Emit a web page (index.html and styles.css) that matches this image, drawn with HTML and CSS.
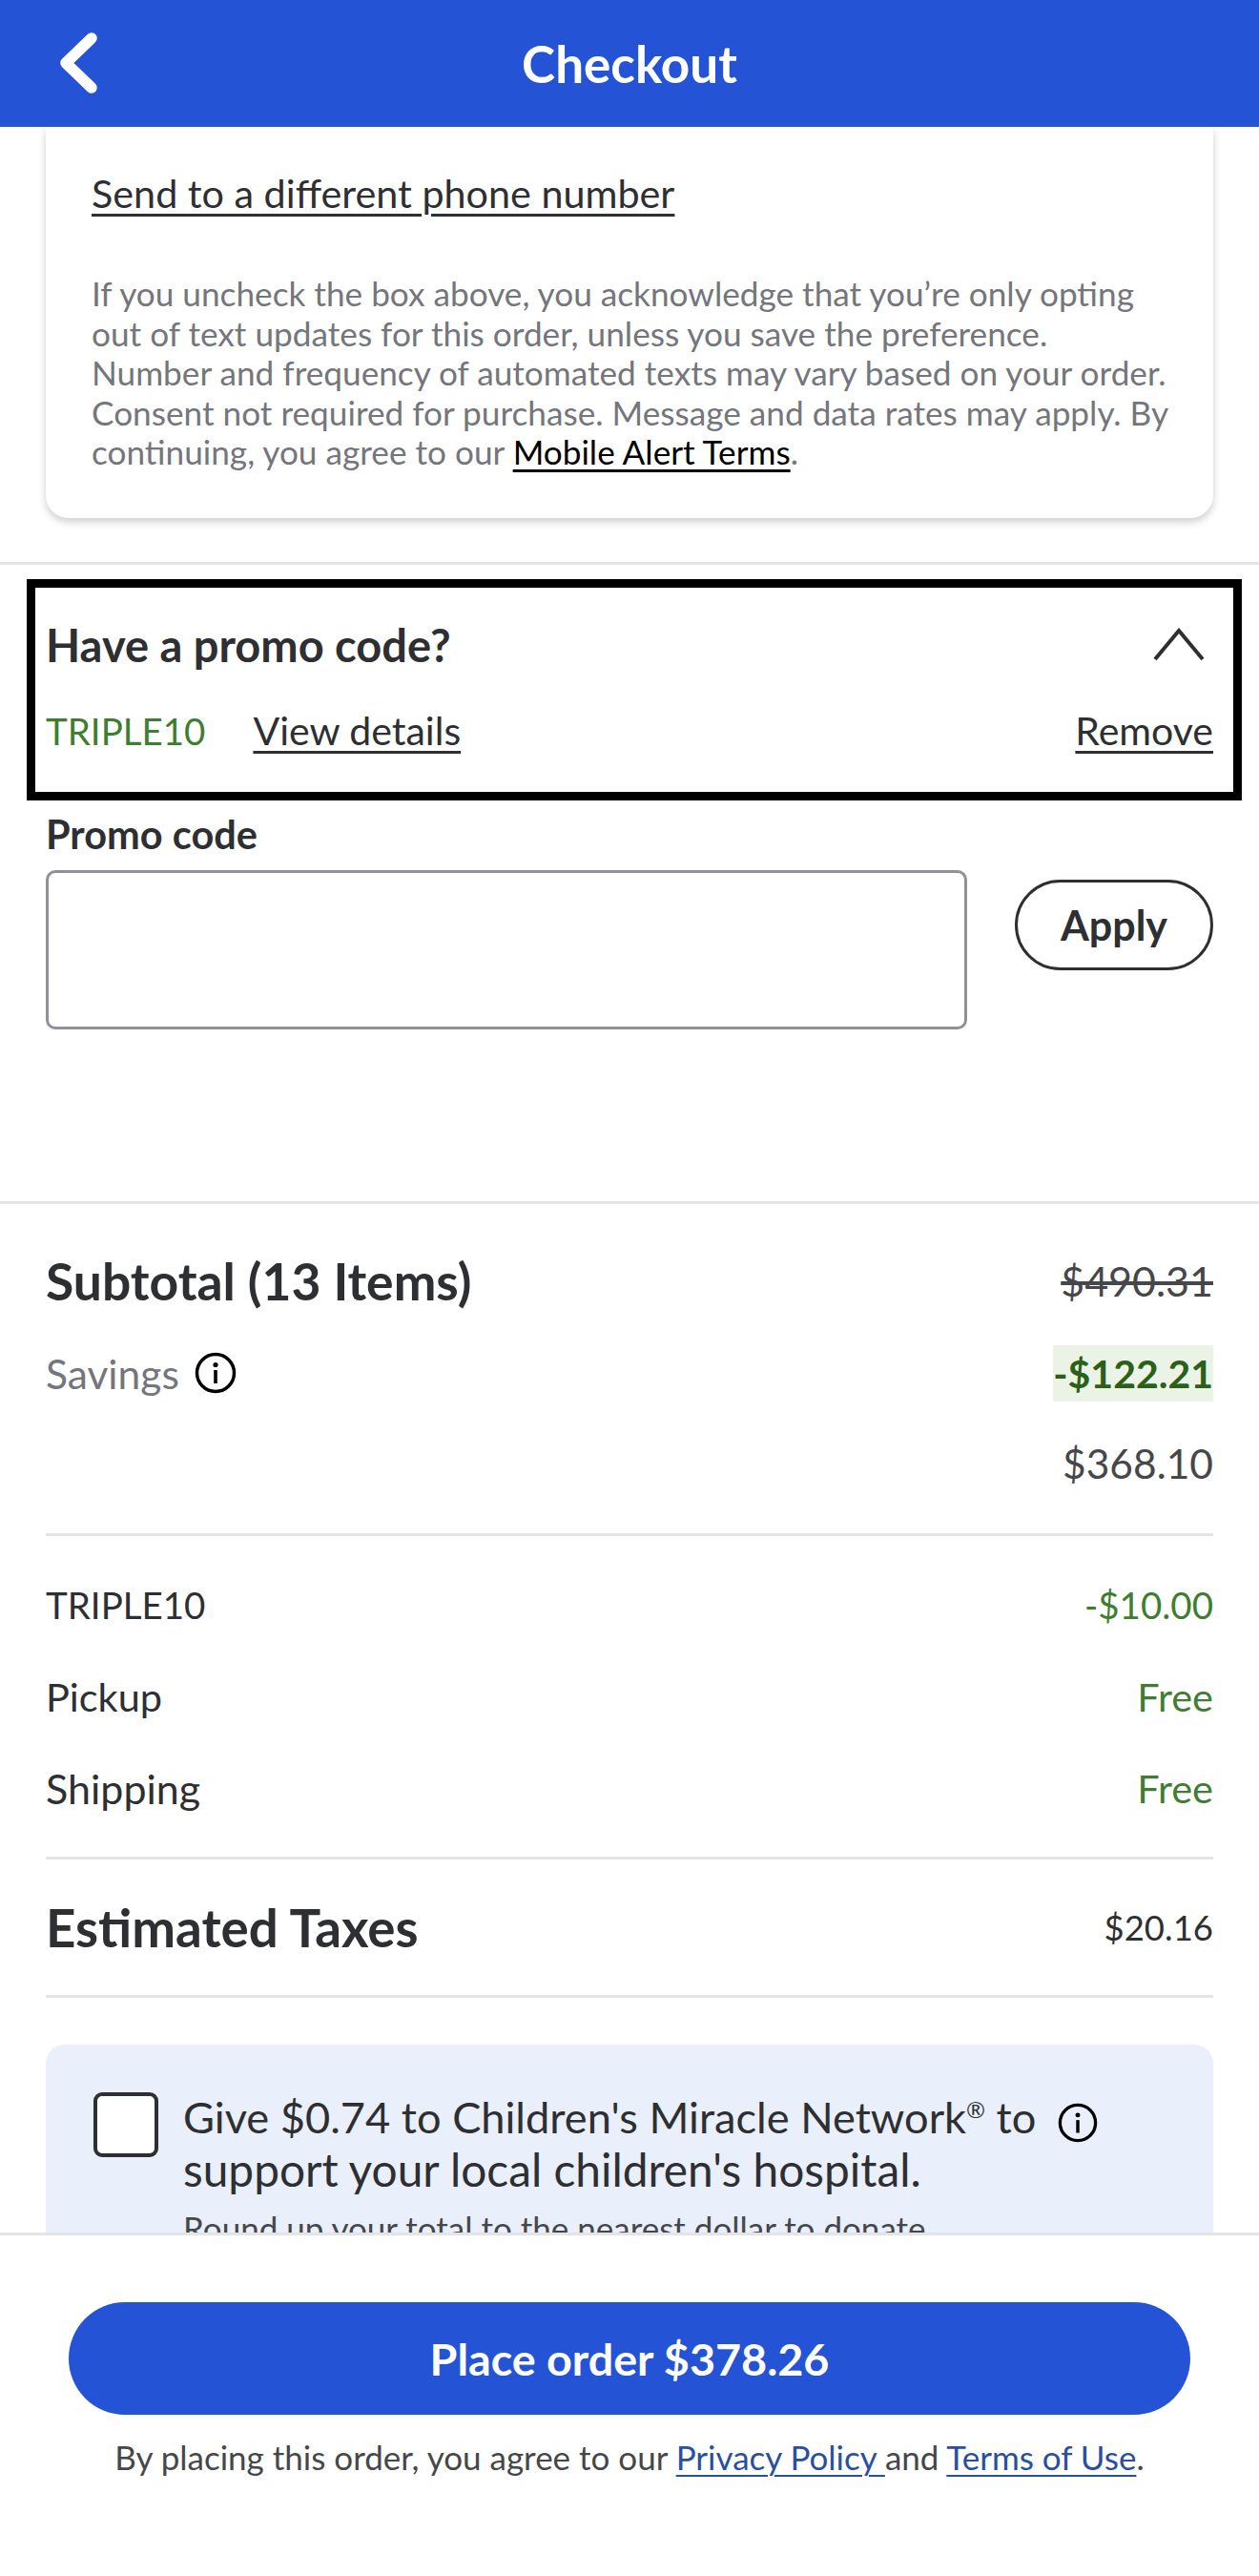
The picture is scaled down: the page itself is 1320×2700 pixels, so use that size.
FILE: index.html
```html
<!DOCTYPE html>
<html lang="en">
<head>
<meta charset="utf-8">
<title>Checkout</title>
<link rel="stylesheet" href="styles.css">
</head>
<body>
<div class="app">
  <header class="topbar">
    <svg class="back" viewBox="0 0 44 64" width="44" height="64"><path d="M36 6 L9 32 L36 58" fill="none" stroke="#fff" stroke-width="11.5" stroke-linecap="round" stroke-linejoin="round"/></svg>
    <h1 class="title">Checkout</h1>
  </header>
  <main class="scroll">
    <section class="card">
      <a class="link phone-link">Send to a different phone number</a>
      <p class="legal">If you uncheck the box above, you acknowledge that you’re only opting<br>out of text updates for this order, unless you save the preference.<br>Number and frequency of automated texts may vary based on your order.<br>Consent not required for purchase. Message and data rates may apply. By<br>continuing, you agree to our <a class="link-black">Mobile Alert Terms</a>.</p>
    </section>
    <hr class="rule-full first">
    <section class="promo-box">
      <div class="row promo-head">
        <h2 class="promo-title">Have a promo code?</h2>
        <svg class="chev" viewBox="0 0 56 36" width="56" height="36"><path d="M3 33 L28 3 L53 33" fill="none" stroke="#2e2f32" stroke-width="4"/></svg>
      </div>
      <div class="row promo-applied">
        <span class="code">TRIPLE10</span>
        <a class="link details">View details</a>
        <a class="link remove">Remove</a>
      </div>
    </section>
    <section class="promo-form">
      <label class="promo-label">Promo code</label>
      <div class="form-row">
        <div class="input"></div>
        <button class="apply">Apply</button>
      </div>
    </section>
    <hr class="rule-full second">
    <section class="summary">
      <div class="row sub-row">
        <h2 class="big-label subtotal">Subtotal (13 Items)</h2>
        <s class="was">$490.31</s>
      </div>
      <div class="row save-row">
        <span class="savings">Savings
          <svg class="info" viewBox="0 0 44 44" width="44" height="44"><circle cx="22" cy="22" r="19.5" fill="none" stroke="#000" stroke-width="3.5"/><circle cx="22" cy="13.5" r="2.6" fill="#000"/><rect x="20.2" y="19" width="3.6" height="14" fill="#000"/></svg>
        </span>
        <span class="save-amt">-$122.21</span>
      </div>
      <div class="row net-row"><span class="net">$368.10</span></div>
      <hr class="rule">
      <div class="row line first-line"><span class="digits">TRIPLE10</span><span class="green digits">-$10.00</span></div>
      <div class="row line"><span>Pickup</span><span class="green">Free</span></div>
      <div class="row line"><span class="ship">Shipping</span><span class="green">Free</span></div>
      <hr class="rule after-lines">
      <div class="row tax-row"><h2 class="big-label">Estimated Taxes</h2><span class="tax">$20.16</span></div>
      <hr class="rule">
      <div class="donate">
        <div class="checkbox"></div>
        <div class="donate-body">
          <p class="donate-text"><span class="donate-one">Give $0.74 to Children's Miracle Network<sup class="reg">®</sup> to</span><br><span class="donate-two">support your local children's hospital.</span></p>
          <p class="donate-note">Round up your total to the nearest dollar to donate.</p>
        </div>
        <svg class="info info-small" viewBox="0 0 44 44" width="42" height="42"><circle cx="22" cy="22" r="19.5" fill="none" stroke="#000" stroke-width="3.5"/><circle cx="22" cy="13.5" r="2.6" fill="#000"/><rect x="20.2" y="19" width="3.6" height="14" fill="#000"/></svg>
      </div>
    </section>
  </main>
  <footer class="footer">
    <button class="place">Place order $378.26</button>
    <p class="agree">By placing this order, you agree to our <a class="link-blue">Privacy Policy </a>and <a class="link-blue">Terms of Use</a>.</p>
  </footer>
</div>
</body>
</html>
```
FILE: styles.css
```css
* { box-sizing: border-box; }
html, body { margin: 0; padding: 0; background: #fff; }
body { font-family: "Lato", "Liberation Sans", sans-serif; color: #2e2f32; }
h1, h2, p { margin: 0; }
hr { margin: 0; border: 0; }
.app { width: 1320px; height: 2700px; display: flex; flex-direction: column; overflow: hidden; }
.topbar { height: 133px; flex: none; background: #2453d6; display: flex; align-items: center; justify-content: center; position: relative; }
.back { position: absolute; left: 60px; top: 34px; }
.title { color: #fff; font-size: 53px; font-weight: 700; }
.scroll { flex: 1; min-height: 0; overflow: hidden; }
.card { margin: 0 48px; padding: 43px 48px 0; height: 410px; background: #fff; border-radius: 0 0 24px 24px; box-shadow: 0 4px 8px rgba(0,0,0,.2); }
.link { color: #2e2f32; text-decoration: underline; text-underline-offset: 6px; text-decoration-thickness: 3px; }
.phone-link { display: block; font-size: 41.3px; line-height: 52px; }
.legal { margin-top: 59px; font-size: 35.2px; line-height: 41.5px; color: #74767c; white-space: nowrap; }
.link-black { color: #000; text-decoration: underline; text-underline-offset: 5px; text-decoration-thickness: 3px; }
.rule-full { height: 3px; background: #e3e4e5; }
.rule-full.first { margin-top: 46px; }
.promo-box { margin: 15px 18px 0 28px; height: 232px; border: 9px solid #000; padding: 0 21px 0 11px; }
.row { display: flex; justify-content: space-between; align-items: center; }
.promo-head { height: 46px; margin-top: 37px; }
.promo-title { font-size: 47px; font-weight: 700; }
.chev { margin-right: 8px; }
.promo-applied { margin-top: 42px; font-size: 41px; line-height: 50px; justify-content: flex-start; }
.code { color: #3f7d30; font-size: 38.5px; }
.details { margin-left: 50px; }
.remove { margin-left: auto; }
.promo-form { padding: 0 48px; height: 406px; }
.promo-label { display: block; margin-top: 14px; font-size: 41.5px; font-weight: 700; line-height: 42px; }
.form-row { display: flex; justify-content: space-between; align-items: flex-start; margin-top: 17px; }
.input { width: 966px; height: 167px; border: 3px solid #909196; border-radius: 10px; }
.apply { margin-top: 10px; width: 208px; height: 95px; background: #fff; border: 3px solid #2e2f32; border-radius: 48px; font: 700 43px "Lato", sans-serif; color: #2e2f32; }
.summary { padding: 0 48px; }
.big-label { font-size: 54.7px; font-weight: 700; }
.big-label.subtotal { font-size: 53.4px; }
.sub-row { margin-top: 50px; height: 60px; }
.was { font-size: 43px; color: #46474a; }
.save-row { margin-top: 32px; height: 70px; }
.savings { display: flex; align-items: center; gap: 16px; font-size: 42.5px; color: #74767c; }
.save-amt { background: #eaf3e6; color: #2a6018; font-size: 41px; font-weight: 700; padding: 5px 0; }
.net-row { justify-content: flex-end; margin-top: 31px; height: 56px; }
.net { font-size: 42.5px; color: #46474a; }
.rule { height: 3px; background: #e3e4e5; }
.net-row + .rule { margin-top: 46px; }
.line { height: 96px; font-size: 41.5px; }
.digits { font-size: 38.5px; }
.ship { font-size: 43px; }
.first-line { margin-top: 24px; }
.green { color: #3f7d30; }
.after-lines { margin-top: 24px; }
.tax-row { height: 142px; }
.tax { font-size: 36.5px; }
.donate { position: relative; margin-top: 49px; height: 260px; background: #e9effb; border-radius: 20px; padding: 50px 50px 0; display: flex; align-items: flex-start; }
.checkbox { width: 68px; height: 68px; flex: none; background: #fff; border: 4px solid #2e2f32; border-radius: 9px; }
.donate-body { margin-left: 26px; width: 920px; }
.donate-text { font-size: 46px; line-height: 55px; margin-top: -2px; white-space: nowrap; }
.donate-one { font-size: 45.2px; }
.donate-two { font-size: 47.8px; }
.reg { font-size: 24px; line-height: 0; }
.donate-note { margin-top: 12px; font-size: 35px; line-height: 42px; color: #46474a; white-space: nowrap; }
.info-small { position: absolute; left: 1061px; top: 61px; }
.footer { flex: none; height: 360px; background: #fff; border-top: 3px solid #e3e4e5; padding: 70px 72px 0; display: flex; flex-direction: column; align-items: center; }
.place { width: 100%; height: 118px; border: 0; border-radius: 59px; background: #2453d6; color: #fff; font: 700 46.7px "Lato", sans-serif; }
.agree { margin-top: 23px; font-size: 35px; line-height: 42px; color: #46474a; white-space: nowrap; }
.link-blue { color: #2a4f9e; text-decoration: underline; text-underline-offset: 5px; text-decoration-thickness: 2px; }
```
